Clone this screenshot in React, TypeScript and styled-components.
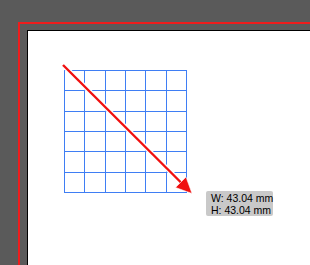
import React from 'react'
import styled, { createGlobalStyle } from 'styled-components'

const GlobalStyle = createGlobalStyle`
  html, body {
    margin: 0;
    padding: 0;
    background: #5a5a5a;
    overflow: hidden;
  }
`

const Workspace = styled.div`
  width: 310px;
  height: 265px;
  background: #5a5a5a;
  padding: 22px 0 0 18px;
  box-sizing: border-box;
  overflow: hidden;
`

// red bleed guide, only top and left edges are visible
const BleedFrame = styled.div`
  border-top: 2px solid #ee1c1c;
  border-left: 2px solid #ee1c1c;
  padding: 6px 0 0 7px;
  height: 100%;
  box-sizing: border-box;
`

const Artboard = styled.div`
  position: relative;
  background: #ffffff;
  border-top: 1px solid #000;
  border-left: 1px solid #000;
  height: 400px;
`

const Canvas = styled.svg`
  display: block;
`

const SizeTip = styled.div<{ left: number, top: number }>`
  position: absolute;
  left: ${props => props.left}px;
  top: ${props => props.top}px;
  width: 67px;
  height: 25px;
  box-sizing: border-box;
  padding: 1px 0 0 5px;
  background: #c9c9c9;
  border-radius: 2px;
  font-family: "Liberation Sans", Arial, sans-serif;
  font-size: 10.5px;
  line-height: 12px;
  color: #000;
  white-space: nowrap;
`

const GRID_X = 36
const GRID_Y = 39
const CELL = 20.33
const CELLS = 6

const Grid: React.FC = () => {
  const lines = []
  for (let i = 0; i <= CELLS; i++) {
    const p = Math.round(i * CELL) + 0.5
    lines.push(<line key={'v' + i} x1={GRID_X + p} y1={GRID_Y} x2={GRID_X + p} y2={GRID_Y + 123} />)
    lines.push(<line key={'h' + i} x1={GRID_X} y1={GRID_Y + p} x2={GRID_X + 123} y2={GRID_Y + p} />)
  }
  return <g stroke="#3f7ef4" strokeWidth={1}>{lines}</g>
}

const Arrow: React.FC = () => (
  <g>
    <line x1={35} y1={34} x2={153} y2={151.5} stroke="#fff" strokeWidth={5} />
    <line x1={35} y1={34} x2={153} y2={151.5} stroke="#f01010" strokeWidth={2.4} />
    <polygon points="164,162.5 147.5,156.5 158,146" fill="#f01010" stroke="#fff" strokeWidth={0.6} />
  </g>
)

export default function App() {
  return (
    <>
      <GlobalStyle />
      <Workspace>
        <BleedFrame>
          <Artboard>
            <Canvas width={282} height={234}>
              <Grid />
              <Arrow />
            </Canvas>
            <SizeTip left={178} top={160}>
              <div>W: 43.04 mm</div>
              <div>H: 43.04 mm</div>
            </SizeTip>
          </Artboard>
        </BleedFrame>
      </Workspace>
    </>
  )
}
